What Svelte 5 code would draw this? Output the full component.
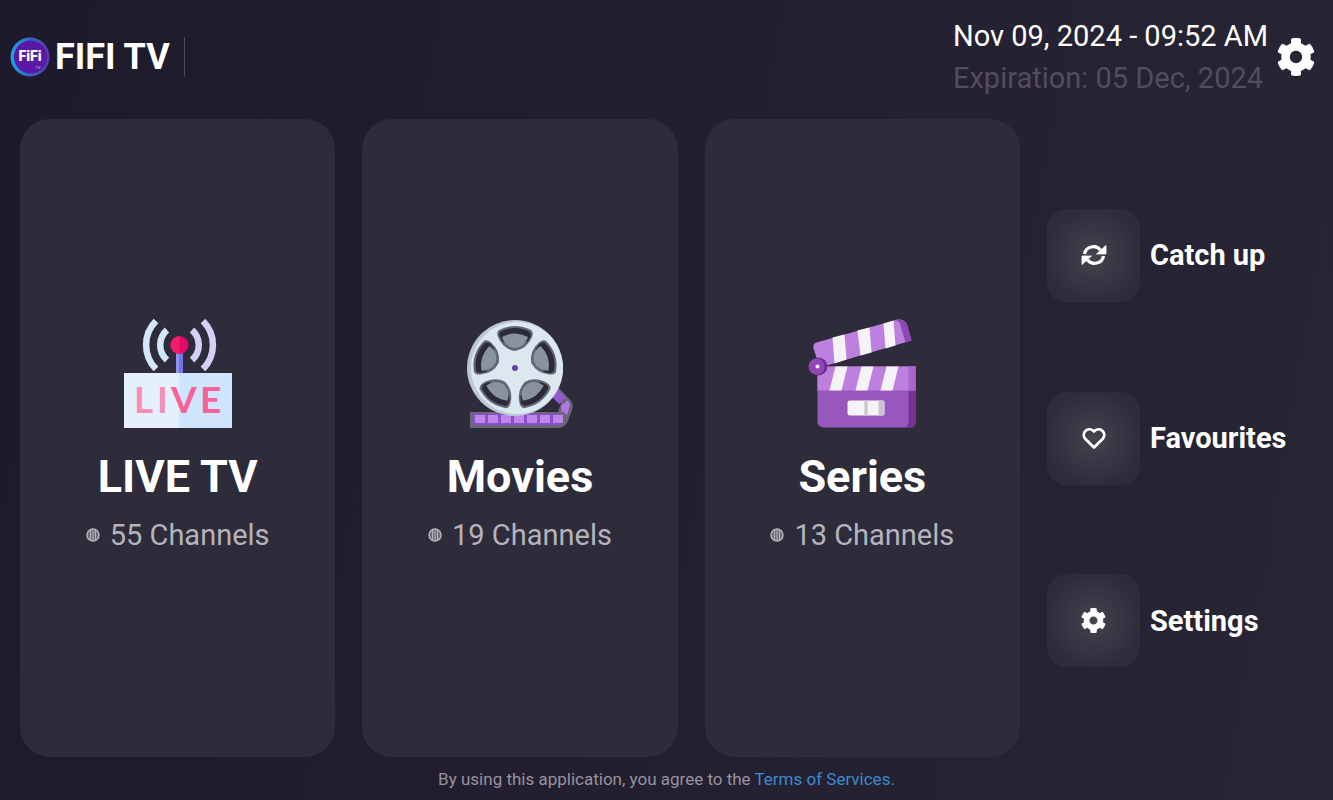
<script>
  const categories = [
    { id: 'live', title: 'LIVE TV', count: 55 },
    { id: 'movies', title: 'Movies', count: 19 },
    { id: 'series', title: 'Series', count: 13 },
  ];

  const shortcuts = [
    { id: 'catchup', label: 'Catch up' },
    { id: 'favourites', label: 'Favourites' },
    { id: 'settings', label: 'Settings' },
  ];

  const reelHoles = [0, 72, 144, 216, 288];
  const frames = [8, 21, 34, 47, 60, 73, 86];
</script>

{#snippet gear()}
  <path fill="#fff" d="M487.4 315.7l-42.6-24.6c4.3-23.2 4.3-47 0-70.2l42.6-24.6c4.9-2.8 7.1-8.6 5.5-14-11.1-35.6-30-67.8-54.7-94.6-3.8-4.1-10-5.1-14.8-2.3L380.8 110c-17.9-15.4-38.5-27.3-60.8-35.1V25.8c0-5.6-3.9-10.5-9.4-11.7-36.7-8.2-74.3-7.8-109.2 0-5.5 1.2-9.4 6.1-9.4 11.7V75c-22.2 7.9-42.8 19.8-60.8 35.1L88.7 85.5c-4.9-2.8-11-1.9-14.8 2.3-24.7 26.7-43.6 58.9-54.7 94.6-1.7 5.4.6 11.2 5.5 14L67.3 221c-4.3 23.2-4.3 47 0 70.2l-42.6 24.6c-4.9 2.8-7.1 8.6-5.5 14 11.1 35.6 30 67.8 54.7 94.6 3.8 4.1 10 5.1 14.8 2.3l42.6-24.6c17.9 15.4 38.5 27.3 60.8 35.1v49.2c0 5.6 3.9 10.5 9.4 11.7 36.7 8.2 74.3 7.8 109.2 0 5.5-1.2 9.4-6.1 9.4-11.7v-49.2c22.2-7.9 42.8-19.8 60.8-35.1l42.6 24.6c4.9 2.8 11 1.9 14.8-2.3 24.7-26.7 43.6-58.9 54.7-94.6 1.5-5.5-.7-11.3-5.6-14.1zM256 336c-44.1 0-80-35.9-80-80s35.9-80 80-80 80 35.9 80 80-35.9 80-80 80z" />
{/snippet}

<div class="home">
  <header class="topbar">
    <div class="brand">
      <svg class="logo" viewBox="0 0 40 40" aria-hidden="true">
        <defs>
          <linearGradient id="ring" x1="0" y1="0" x2="1" y2="0">
            <stop offset="0" stop-color="#1fa2e6" />
            <stop offset="0.5" stop-color="#2b6cc9" />
            <stop offset="1" stop-color="#5a35b4" />
          </linearGradient>
        </defs>
        <circle cx="20" cy="20" r="19.5" fill="url(#ring)" />
        <circle cx="20.5" cy="20" r="16.5" fill="#5a18a4" />
        <text class="logo-text" x="20" y="24" text-anchor="middle">FiFi</text>
        <text class="logo-sub" x="28" y="32" text-anchor="middle">TV</text>
      </svg>
      <h1>FIFI TV</h1>
    </div>
    <div class="status">
      <div class="dates">
        <p class="now">Nov 09, 2024 - 09:52 AM</p>
        <p class="expires">Expiration: 05 Dec, 2024</p>
      </div>
      <button class="gear-btn" aria-label="Open settings">
        <svg viewBox="8 8 496 496" width="38" height="38">{@render gear()}</svg>
      </button>
    </div>
  </header>

  <main class="content">
    {#each categories as cat (cat.id)}
      <button class="card">
        <svg class="art" viewBox="0 0 108 108" aria-hidden="true">
          {#if cat.id === 'live'}
            <g fill="none" stroke-width="6.5">
              <g stroke="#d3e7fb">
                <path d="M32 1A34 34 0 0 0 32 49" />
                <path d="M43 10A20 20 0 0 0 43 40" />
              </g>
              <g stroke="#d2d2f7">
                <path d="M79 1A34 34 0 0 1 79 49" />
                <path d="M68 10A20 20 0 0 1 68 40" />
              </g>
            </g>
            <rect x="52" y="30" width="7" height="24" fill="#7375e6" />
            <rect x="52" y="30" width="3" height="24" fill="#9291f2" />
            <circle cx="55.5" cy="25" r="9" fill="#e3086b" />
            <path d="M55.5 16a9 9 0 0 0 0 18z" fill="#f31c68" />
            <rect y="53" width="108" height="55" fill="#cfe5fd" />
            <rect y="53" width="55" height="55" fill="#e4f1fc" />
            <g fill="#f8629a">
              <text class="live-text pale" x="10" y="93">L</text>
              <text class="live-text pale" x="33" y="93">I</text>
              <text class="live-text" x="47" y="93">V</text>
              <text class="live-text" x="76" y="93">E</text>
            </g>
          {:else if cat.id === 'movies'}
            <path d="M91 66l14 15q3 4 1 9l-4 11q-3 7-10 7H84l8-16 3-9-12-12z" fill="#696779" />
            <path d="M92 69l8 9-7 6-8-8z" fill="#9458d0" />
            <path d="M102 80l2 5-3 10-5-3-1-6z" fill="#b376e6" />
            <path d="M4 92h95q-2 15-15 16H4z" fill="#696779" />
            <path d="M7 94h88v11H7z" fill="#8c4ecb" />
            {#each frames as x (x)}
              <rect x={x + 1} y="95" width="10" height="8" fill="#bd87ea" />
            {/each}
            <circle cx="49" cy="48" r="48" fill="#bdc8d4" />
            <circle cx="51" cy="48" r="46" fill="#dde7ef" />
            {#each reelHoles as angle (angle)}
              <g transform="translate(1 0) rotate({angle} 48 48)">
                <path d="M32 10Q48 2 64 10Q67 12 65 17Q60 29 48 31Q36 29 31 17Q29 12 32 10Z" fill="#5f6875" />
                <path d="M33 12Q48 4 63 12L64 16Q62 20 60 22H36Q33 18 32 15Z" fill="#2b293a" />
                <path d="M35 17Q48 10 61 17Q58 27 48 28Q38 27 35 17Z" fill="#89939f" />
              </g>
            {/each}
            <circle cx="49" cy="48" r="3" fill="#6b40a0" />
          {:else}
            <g transform="translate(1.5 -0.5)">
              <path d="M7 23L88 0Q96-1 98 7L102 21L17 46L9 44L4 29Q3 24 7 23Z" fill="#bd80df" />
              <path d="M88 0Q96-1 98 7L102 21L96 23L91 6Q90 1 86 1Z" fill="#8f49b5" />
              <path d="M23 18L35 15L37 40L25 44Z" fill="#f5f3f8" />
              <path d="M48 11L60 8L62 33L51 36Z" fill="#f5f3f8" />
              <path d="M74 4L84 1L86 26L76 29Z" fill="#f5f3f8" />
              <path d="M8 47H106V104Q105 108 101 108H14Q8 107 8 102Z" fill="#9757bd" />
              <path d="M99 47h7v56q-1 5-6 5h-4q3-2 3-6z" fill="#73338f" />
              <path d="M8 47h98v24H8z" fill="#bd80df" />
              <path d="M99 47h7v24h-7z" fill="#a865ca" />
              <path d="M26 47h12l-6 24H20zM52 47h12l-6 24H46zM77 47h12l-6 24H71z" fill="#f5f3f8" />
              <rect x="38" y="81" width="37" height="15" rx="2" fill="#f5f3f8" />
              <path d="M55 81h3v15h-3z" fill="#c9c2d0" />
              <path d="M69 81h4q2 0 2 2v11q0 2-2 2h-4z" fill="#c9c2d0" />
              <circle cx="9" cy="47" r="9" fill="#713092" />
              <circle cx="7" cy="47" r="8" fill="#9245b4" />
              <circle cx="8" cy="47" r="2" fill="#f5f3f8" />
            </g>
          {/if}
        </svg>
        <span class="card-title">{cat.title}</span>
        <span class="card-count">
          <svg viewBox="0 0 14 14" width="14" height="14" aria-hidden="true">
            <circle cx="7" cy="7" r="6" fill="#6f6c78" stroke="#b5b3bc" stroke-width="1.5" />
            <path d="M4.5 2v10M7 1v12M9.5 2v10" stroke="#b5b3bc" stroke-width="1" />
          </svg>
          {cat.count} Channels
        </span>
      </button>
    {/each}

    <nav class="shortcuts">
      {#each shortcuts as item (item.id)}
        <button class="shortcut">
          <span class="tile">
            {#if item.id === 'catchup'}
              <svg viewBox="0 0 26 24" width="26" height="24">
                <path d="M3.5 11A9 8.5 0 0 1 19.5 7M22.5 13A9 8.5 0 0 1 6.5 17" fill="none" stroke="#fff" stroke-width="3.2" />
                <path d="M25 2.500V11H15.500ZM1 21.500V13H10.500Z" fill="#fff" stroke="#fff" stroke-width="0.8" stroke-linejoin="round" />
              </svg>
            {:else if item.id === 'favourites'}
              <svg viewBox="0 0 26 24" width="26" height="24">
                <path d="M13 21.5L4 12.5A5.700 5.700 0 0 1 12 4.5L13 5.500L14 4.500A5.700 5.700 0 0 1 22 12.500Z" fill="none" stroke="#fff" stroke-width="2.8" stroke-linejoin="round" />
              </svg>
            {:else}
              <svg viewBox="8 8 496 496" width="25" height="25">{@render gear()}</svg>
            {/if}
          </span>
          <span class="shortcut-label">{item.label}</span>
        </button>
      {/each}
    </nav>
  </main>

  <footer class="terms">
    By using this application, you agree to the <a href="#terms">Terms of Services.</a>
  </footer>
</div>

<style>
  :global(body) {
    margin: 0;
    background: #231f30;
  }

  .home {
    min-height: 100vh;
    box-sizing: border-box;
    display: flex;
    flex-direction: column;
    background: linear-gradient(100deg, #1e192b 0%, #231f30 50%, #282535 100%);
    color: #fff;
    font-family: Roboto, "Noto Sans", sans-serif;
  }

  button {
    border: 0;
    padding: 0;
    background: none;
    color: inherit;
    font: inherit;
    cursor: pointer;
  }

  svg {
    display: block;
    flex: none;
  }

  .topbar {
    display: flex;
    align-items: center;
    justify-content: space-between;
    padding: 15px 18px 20px 10px;
  }

  .brand {
    display: flex;
    align-items: center;
    gap: 5px;
    height: 40px;
    padding-right: 14px;
    border-right: 1px solid #4b4757;
  }

  .logo {
    width: 40px;
    height: 40px;
  }

  .logo-text {
    fill: #fff;
    font-size: 14px;
    font-weight: 900;
  }

  .logo-sub {
    fill: #d8c8ee;
    font-size: 4px;
  }

  h1 {
    margin: 0;
    font-size: 36px;
    line-height: 40px;
    font-weight: 700;
  }

  .status {
    display: flex;
    align-items: center;
    gap: 9px;
  }

  .dates p {
    margin: 0;
    font-size: 29px;
    line-height: 42px;
  }

  .dates .expires {
    color: #514e5d;
  }

  .content {
    flex: 1;
    display: grid;
    grid-template-columns: repeat(3, 1fr) 286px;
    gap: 27px;
    padding-left: 20px;
  }

  .card {
    display: flex;
    flex-direction: column;
    align-items: center;
    justify-content: center;
    border-radius: 30px;
    background: #2e2b3b;
  }

  .art {
    width: 108px;
    height: 108px;
    overflow: visible;
  }

  .live-text {
    font-family: Lato, sans-serif;
    font-size: 37px;
    font-weight: 700;
  }

  .pale {
    fill: #f98db5;
  }

  .card-title {
    margin-top: 21px;
    font-size: 45px;
    line-height: 56px;
    font-weight: 700;
  }

  .card-count {
    display: flex;
    align-items: center;
    gap: 10px;
    margin-top: 8px;
    font-size: 29px;
    line-height: 44px;
    color: #b5b3bc;
  }

  .shortcuts {
    display: flex;
    flex-direction: column;
    justify-content: space-evenly;
    align-items: flex-start;
  }

  .shortcut {
    display: flex;
    align-items: center;
    gap: 10px;
  }

  .tile {
    display: grid;
    place-items: center;
    width: 93px;
    height: 93px;
    border-radius: 20px;
    background: radial-gradient(circle, #45434f 0%, #2e2b3b 75%);
  }

  .shortcut-label {
    font-size: 29px;
    font-weight: 700;
  }

  .terms {
    padding: 10px 0 9px;
    text-align: center;
    font-size: 17px;
    line-height: 24px;
    color: #96939c;
  }

  .terms a {
    color: #3d8ad0;
    text-decoration: none;
  }
</style>
